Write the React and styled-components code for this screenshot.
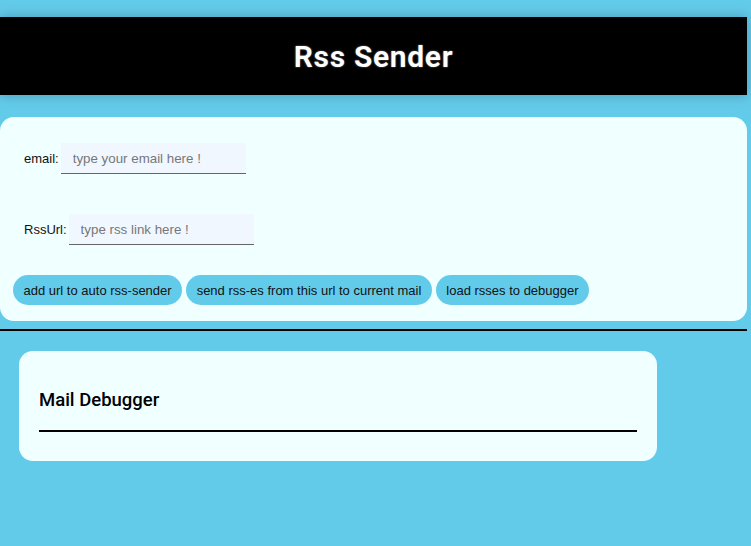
import styled, { createGlobalStyle } from 'styled-components';

const GlobalStyle = createGlobalStyle`
  html, body {
    margin: 0;
    padding: 0;
    background-color: #63cbea;
    font-family: Roboto, "Liberation Sans", sans-serif;
  }
`

const App = () => {
    return <Page>
        <GlobalStyle />
        <Header>
            <Title>Rss Sender</Title>
        </Header>
        <Panel>
            <Field>
                <Label>email:</Label>
                <Input type="text" placeholder="type your email here !" />
            </Field>
            <Field $top={40}>
                <Label>RssUrl:</Label>
                <Input type="text" placeholder="type rss link here !" />
            </Field>
            <Buttons>
                <Button>add url to auto rss-sender</Button>
                <Button>send rss-es from this url to current mail</Button>
                <Button>load rsses to debugger</Button>
            </Buttons>
        </Panel>
        <Line />
        <Debugger>
            <DebugTitle>Mail Debugger</DebugTitle>
            <DebugRule />
        </Debugger>
    </Page>;
};

const Page = styled.div`
    width: 747px;
    padding-top: 17px;
`

const Header = styled.div`
    height: 78px;
    background-color: #000;
    display: flex;
    align-items: center;
    justify-content: center;
    box-shadow: 0 0 12px rgba(0, 0, 0, 0.25);
`

const Title = styled.h1`
    margin: 0;
    color: #fff;
    font-size: 30px;
    font-weight: 600;
    letter-spacing: 0.7px;
    text-shadow: 0 0 2px rgba(255, 255, 255, 0.5);
`

const Panel = styled.div`
    margin-top: 22px;
    background-color: #f0ffff;
    border-radius: 14px;
    padding: 26px 0 16px 13px;
`

const Field = styled.div`
    display: flex;
    align-items: center;
    margin-top: ${props => props.$top || 0}px;
    padding-left: 11px;
`

const Label = styled.label`
    font-family: "Liberation Sans", Arial, sans-serif;
    font-size: 13px;
    color: #111;
    margin-right: 2px;
`

const Input = styled.input`
    width: 185px;
    height: 31px;
    box-sizing: border-box;
    border: none;
    border-bottom: 1px solid #666;
    background-color: #f0f7ff;
    padding: 0 12px;
    font-family: "Liberation Sans", Arial, sans-serif;
    font-size: 13.33px;
    outline: none;

    &::placeholder {
        color: #777;
    }
`

const Buttons = styled.div`
    display: flex;
    gap: 4px;
    margin-top: 30px;
`

const Button = styled.button`
    height: 30px;
    border: none;
    border-radius: 15px;
    background-color: #63cbea;
    color: #111;
    padding: 0 10.5px;
    font-family: "Liberation Sans", Arial, sans-serif;
    font-size: 13px;
    cursor: pointer;
`

const Line = styled.div`
    margin-top: 8px;
    height: 2px;
    background-color: #000;
`

const Debugger = styled.div`
    margin: 20px 0 0 19px;
    width: 638px;
    height: 110px;
    box-sizing: border-box;
    background-color: #f0ffff;
    border-radius: 14px;
    padding: 38px 20px 0;
`

const DebugTitle = styled.h3`
    margin: 0;
    font-size: 18.5px;
    font-weight: 500;
    color: #000;
`

const DebugRule = styled.div`
    margin-top: 19px;
    height: 2px;
    background-color: #000;
`

export default App;
